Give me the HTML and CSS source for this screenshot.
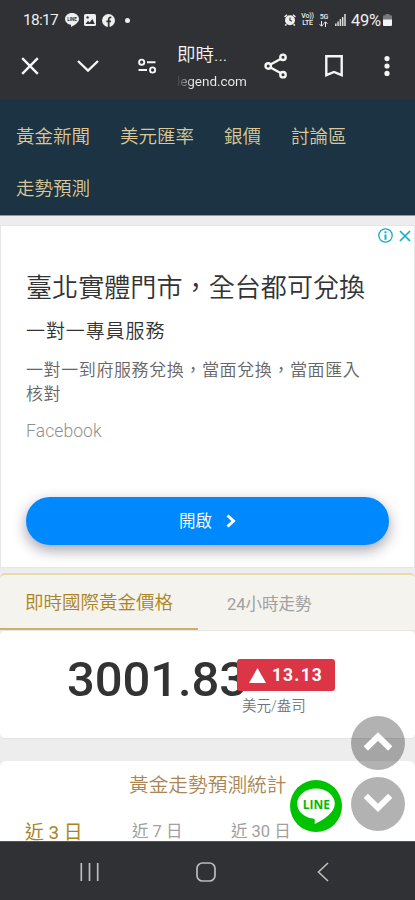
FILE: index.html
```html
<!DOCTYPE html>
<html lang="zh-Hant">
<head>
<meta charset="utf-8">
<title>即時國際黃金價格</title>
<link rel="stylesheet" href="styles.css">
</head>
<body>
<div class="phone">
  <header class="browser">
    <div class="status">
      <span class="clock">18:17</span>
      <svg class="s-line" width="14" height="14" viewBox="0 0 14 14"><path fill="#eee" d="M7 0C3 0 0 2.700 0 6c0 3 2.600 5.400 6 5.800V14c3.500-1.700 8-4.500 8-8 0-3.300-3-6-7-6z"/><text x="7" y="8" text-anchor="middle" class="tiny-line">LINE</text></svg>
      <svg class="s-pic" width="12" height="12" viewBox="0 0 12 12"><rect width="12" height="12" rx="1.500" fill="#eee"/><path fill="#303134" d="M1.500 10 4 6.800l1.700 1.700L8.300 5l2.500 5z"/><circle cx="3.600" cy="3.400" r="1.200" fill="#303134"/></svg>
      <svg class="s-fb" width="13" height="13" viewBox="0 0 13 13"><circle cx="6.500" cy="6.500" r="6.500" fill="#eee"/><path d="M6.700 13V5.400c0-1.500.8-2.100 2.600-1.900M4.400 7.300h4.500" stroke="#303134" stroke-width="1.700" fill="none"/></svg>
      <span class="dot"></span>
      <span class="spacer"></span>
      <svg width="12" height="12" viewBox="0 0 12 12"><circle cx="6" cy="6.300" r="5" fill="#eee"/><path d="M.6 3 3 .8M11.400 3 9 .8M2.400 10.200 1.200 11.600M9.600 10.200l1.200 1.400" stroke="#eee" stroke-width="1.500"/><path d="M6 3.500v3l2 .8" stroke="#303134" stroke-width="1.100" fill="none"/></svg>
      <span class="net volte"><span>Vo))</span><span>LTE</span></span>
      <span class="net fiveg"><span>5G</span><svg width="9" height="6" viewBox="0 0 9 6"><path d="M2.500 0v5M.6 3.200l1.900 2 1.900-2M6.500 6V1M4.600 2.800l1.900-2 1.900 2" stroke="#eee" fill="none"/></svg></span>
      <svg class="s-sig" width="11" height="12" viewBox="0 0 11 12"><path d="M.8 12V9.500M3.100 12V7.500M5.400 12V5M7.700 12V3M10 12V0" stroke="#ddd" stroke-width="1.500"/></svg>
      <span class="pct">49%</span>
      <svg class="s-bat" width="9" height="12" viewBox="0 0 9 12"><path fill="#77787a" d="M2.500 0h4v1.200H8q1 0 1 1V6H0V2.200q0-1 1-1h1.500z"/><path fill="#f4f4f4" d="M0 5.500h9V11q0 1-1 1H1q-1 0-1-1z"/></svg>
    </div>
    <div class="toolbar">
      <span class="tool"><svg width="18" height="18" viewBox="0 0 18 18"><path d="M1.200 1.200 16.800 16.800M16.800 1.200 1.200 16.800"/></svg></span>
      <span class="tool"><svg width="24" height="14" viewBox="0 0 24 14"><path d="M2 2 12 11.700 22 2"/></svg></span>
      <span class="tool"><svg width="20" height="18" viewBox="0 0 20 18"><g stroke-width="1.900"><circle cx="4.700" cy="5.200" r="2.600"/><path d="M10 5.200h8.500M1.500 13h8.500"/><circle cx="15.600" cy="13" r="2.600"/></g></svg></span>
      <span class="page"><span class="page-title">即時...</span><span class="page-url">legend.com</span></span>
      <span class="tool"><svg width="24" height="26" viewBox="0 0 24 26"><path d="M6.500 11.500 17 5.800M6.500 14.500 17 20.200"/><circle cx="4.200" cy="13" r="2.700"/><circle cx="19" cy="4.300" r="2.700"/><circle cx="19" cy="21.700" r="2.700"/></svg></span>
      <span class="tool"><svg width="20" height="24" viewBox="0 0 20 24"><path d="M2.300 2.200h15.400v19L10 18l-7.700 3.200z"/></svg></span>
      <span class="tool more"><svg width="6" height="22" viewBox="0 0 6 22"><g class="solid"><circle cx="3" cy="3.600" r="2.600"/><circle cx="3" cy="11" r="2.600"/><circle cx="3" cy="18.400" r="2.600"/></g></svg></span>
    </div>
  </header>

  <nav class="site-nav">
    <a>黃金新聞</a><a>美元匯率</a><a>銀價</a><a>討論區</a><a>走勢預測</a>
  </nav>

  <section class="ad">
    <div class="ad-marks">
      <svg width="15" height="15" viewBox="0 0 15 15"><circle cx="7.500" cy="7.500" r="6.700"/><path d="M7.500 3.300v1.900M7.500 6.400v5.300" stroke-width="2"/></svg>
      <svg width="12" height="12" viewBox="0 0 12 12"><path d="m1 1 10 10M11 1 1 11" stroke-width="1.700"/></svg>
    </div>
    <h1>臺北實體門市，全台都可兌換</h1>
    <h2>一對一專員服務</h2>
    <p>一對一到府服務兌換，當面兌換，當面匯入核對</p>
    <div class="source">Facebook</div>
    <a class="cta"><span>開啟</span><svg width="10" height="14" viewBox="0 0 10 14"><path d="m1.500 1.500 6 5.500-6 5.500" stroke="#fff" stroke-width="3" fill="none"/></svg></a>
  </section>

  <section class="quote">
    <div class="tabs"><a class="tab active">即時國際黃金價格</a><a class="tab">24小時走勢</a></div>
    <div class="price-card">
      <span class="price">3001.83</span>
      <div class="change">
        <span class="badge"><svg width="17" height="15" viewBox="0 0 17 15"><path d="M8.500 0 17 15H0z" fill="#fff"/></svg>13.13</span>
        <span class="unit">美元/盎司</span>
      </div>
    </div>
  </section>

  <section class="stats">
    <h3>黃金走勢預測統計</h3>
    <div class="ranges"><span class="range on">近 3 日</span><span class="range">近 7 日</span><span class="range">近 30 日</span></div>
  </section>

  <svg class="fab line" width="52" height="52" viewBox="0 0 52 52"><circle cx="26" cy="26" r="26" fill="#00c300"/><path fill="#fff" d="M26 8.500C15.500 8.500 7.200 15.200 7.200 23.700c0 7.500 6.600 13.500 15.800 14.900 2.300.4 2 1.800 1.600 5.400C34 39.500 44.800 32.500 44.800 23.700 44.800 15.200 36.500 8.500 26 8.500z"/><text x="26.300" y="28.800" text-anchor="middle" class="line-word">LINE</text></svg>
  <svg class="fab up" width="54" height="54" viewBox="0 0 54 54"><circle cx="27" cy="27" r="27" fill="#000" fill-opacity=".3"/><path d="M14.800 32.500 27 20.500l12.200 12" stroke="#fff" stroke-width="6" fill="none"/></svg>
  <svg class="fab down" width="54" height="54" viewBox="0 0 54 54"><circle cx="27" cy="27" r="27" fill="#000" fill-opacity=".3"/><path d="M14.800 18.800 27 30.800l12.200-12" stroke="#fff" stroke-width="6" fill="none"/></svg>

  <footer class="sysnav">
    <svg width="19" height="20" viewBox="0 0 19 20"><path d="M1.300 1v18M9.500 1v18M17.700 1v18"/></svg>
    <svg width="20" height="20" viewBox="0 0 20 20"><rect x="1" y="1" width="18" height="18" rx="5.500"/></svg>
    <svg width="12" height="20" viewBox="0 0 12 20"><path d="M11 1 1.500 10l9.500 9"/></svg>
  </footer>
</div>
</body>
</html>
```
FILE: styles.css
```css
* { box-sizing: border-box; }
body { margin: 0; font-family: Roboto, "Noto Sans CJK TC", sans-serif; font-weight: 350; }
svg { flex: none; display: block; }
h1, h2, h3, p { margin: 0; font-weight: 350; }

.phone { position: relative; width: 415px; height: 900px; overflow: hidden; display: flex; flex-direction: column; background: #ededed; }

.browser { flex: none; height: 100px; background: #303134; color: #eee; border-bottom: 1px solid #2a3036; font-weight: 400; }
.status { height: 40px; padding: 0 23px 0 23px; display: flex; align-items: center; }
.clock { font-size: 15.500px; width: 42px; letter-spacing: -.7px; }
.tiny-line { font: 700 4.500px Roboto, sans-serif; fill: #303134; }
.s-pic { margin-left: 5px; }
.s-fb { margin-left: 6px; }
.dot { width: 5px; height: 5px; border-radius: 50%; background: #eee; margin-left: 10px; }
.spacer { flex: 1; }
.net { display: flex; flex-direction: column; align-items: center; font: 500 7px/7px Roboto, sans-serif; letter-spacing: -.2px; }
.volte { margin-left: 5px; width: 13px; }
.fiveg { margin-left: 5px; width: 10px; }
.s-sig { margin-left: 6px; }
.pct { font-size: 16.500px; margin-left: 5px; letter-spacing: -.2px; }
.s-bat { margin-left: 2px; }

.toolbar { height: 59px; display: grid; grid-template-columns: 59px 58px 59px 70px 59px 58px 48px; padding-bottom: 9px; }
.tool { display: flex; align-items: center; justify-content: center; padding-bottom: 3px; }
.tool svg { fill: none; stroke: #f5f5f5; stroke-width: 2.400; }
.tool .solid { fill: #f5f5f5; stroke: none; }
.page { display: flex; flex-direction: column; padding: 2px 0 0 1px; white-space: nowrap; }
.page-title { font-size: 18.500px; font-weight: 350; line-height: 26px; color: #f5f5f5; }
.page-url { font-size: 13.500px; line-height: 26px; letter-spacing: -.05px; background: linear-gradient(90deg, #3a3b3e 0, #eee 16px); background-clip: text; color: transparent; }

.site-nav { flex: none; height: 116px; padding: 11px 16px 0 16px; background: #1b3343; border-bottom: 1px solid #8d9aa3; display: flex; flex-wrap: wrap; align-content: flex-start; column-gap: 30px; }
.site-nav a { font-size: 18.500px; line-height: 52px; color: #dcc896; }

.ad { flex: none; margin-top: 9px; height: 343px; background: #fff; border: 1px solid #e6e6e6; padding: 0 25px; position: relative; }
.ad-marks { position: absolute; top: 2px; right: 3px; display: flex; align-items: center; gap: 6px; }
.ad-marks svg { fill: none; stroke: #13aecb; stroke-width: 1.300; }
.ad h1 { margin-top: 43px; font-size: 26.100px; line-height: 38px; color: #333; white-space: nowrap; }
.ad h2 { margin-top: 11px; font-size: 19px; letter-spacing: .9px; line-height: 28px; color: #333; }
.ad p { margin-top: 12px; width: 345px; font-size: 17px; letter-spacing: .600px; line-height: 24px; color: #666; }
.source { margin-top: 13px; font-size: 17.500px; font-weight: 350; letter-spacing: .1px; line-height: 24px; color: #909090; }
.cta { margin-top: 54px; height: 48px; border-radius: 24px; background: #0088ff; color: #fff; box-shadow: 0 5px 14px rgba(30, 30, 60, .42); display: flex; align-items: center; justify-content: center; gap: 14px; font-size: 16.500px; }
.cta span { padding-bottom: 2px; }

.quote { flex: none; margin-top: 5px; }
.tabs { height: 58px; background: #f5f3ee; border-top: 2px solid #e8d9b0; border-bottom: 1px solid #e8e8e6; border-radius: 5px 5px 0 0; display: flex; }
.tab { font-size: 16.500px; font-weight: 400; color: #a0a0a0; line-height: 59px; padding-left: 29px; }
.tab.active { width: 198px; padding-left: 25px; font-size: 18.500px; font-weight: 350; line-height: 57px; height: 55px; color: #ab8420; border-bottom: 2px solid #cdb168; }
.price-card { height: 108px; background: #fff; border-radius: 5px; padding: 28px 0 0 67px; display: flex; border-bottom: 1px solid #e3e3e3; }
.price { width: 170px; white-space: nowrap; font-size: 49px; font-weight: 500; line-height: 42px; letter-spacing: -.1px; color: #333; }
.change { position: relative; display: flex; flex-direction: column; }
.badge { width: 98px; height: 32px; border-radius: 3px; background: #dc3545; color: #fff; display: flex; align-items: center; justify-content: center; gap: 6px; font-size: 17.500px; font-weight: 700; letter-spacing: 1.200px; }
.unit { padding: 2px 0 0 5px; font-size: 14.500px; line-height: 28px; color: #6c757d; }

.stats { flex: 1; min-height: 0; margin-top: 22px; background: #fff; border-radius: 6px 6px 0 0; overflow: hidden; }
.stats h3 { padding-left: 129px; font-size: 19.700px; line-height: 29px; margin-top: 10px; color: #ab8654; }
.ranges { display: grid; grid-template-columns: 107px 99px 1fr; padding: 18px 0 0 25px; align-items: start; }
.range { font-size: 16.500px; font-weight: 400; line-height: 28px; color: #a0a0a0; white-space: nowrap; }
.range.on { font-size: 18.800px; line-height: 30px; color: #ab8420; }

.fab { position: absolute; }
.fab.line { left: 290px; top: 780px; }
.fab.up { left: 351px; top: 716px; }
.fab.down { left: 351px; top: 777px; }
.line-word { font: 700 12px "Open Sans", sans-serif; fill: #00b900; }

.sysnav { flex: none; height: 59px; background: #303134; border-top: 1px solid #555659; display: grid; grid-template-columns: 179px 54px 179px; justify-items: center; align-items: start; padding-top: 20px; }
.sysnav svg { fill: none; stroke: #bbb; stroke-width: 1.700; }
```
